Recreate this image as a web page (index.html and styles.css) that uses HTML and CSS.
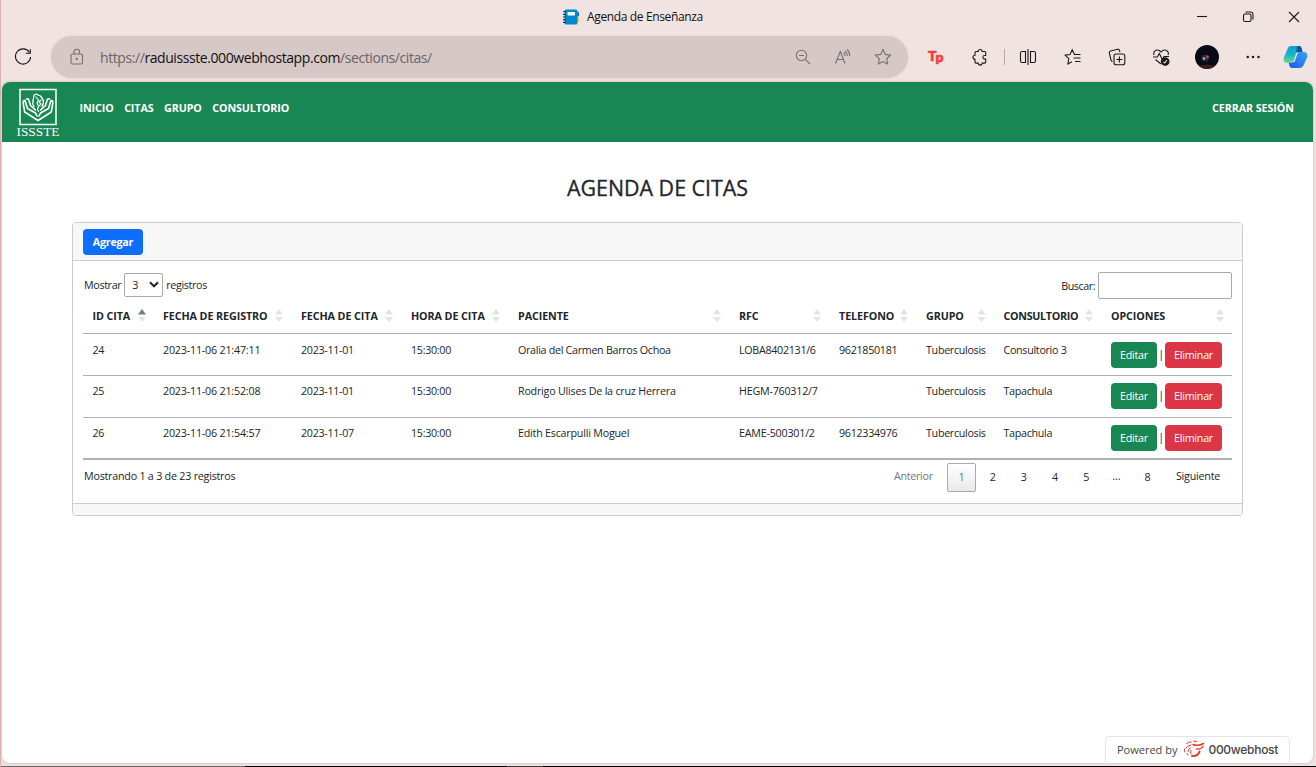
FILE: index.html
```html
<!DOCTYPE html>
<html lang="es">
<head>
<meta charset="utf-8">
<title>Agenda de Enseñanza</title>
<link rel="stylesheet" href="styles.css">
</head>
<body>
<div class="window">
  <header class="titlebar">
    <div class="tab-title">
      <svg width="18" height="16" viewBox="0 0 18 16"><rect x="13" y="3" width="4" height="4.500" rx="1" fill="#1a5fd0"/><rect x="13" y="8.500" width="4" height="4.500" rx="1" fill="#fcc21b"/><rect x="2.500" y=".5" width="13" height="15" rx="1.500" fill="#0288d1"/><rect x="5.500" y="3" width="7.500" height="3.500" rx=".8" fill="#fff"/><path d="M1 2.500h3M1 5.300h3M1 8h3M1 10.700h3M1 13.400h3" stroke="#263845" stroke-width="1.200"/></svg>
      <span>Agenda de Enseñanza</span>
    </div>
    <div class="window-controls">
      <svg width="12" height="12" viewBox="0 0 12 12"><path d="M1 5.500h10"/></svg>
      <svg width="12" height="12" viewBox="0 0 12 12"><rect x="1.500" y="3" width="7.500" height="7.500" rx="1.500"/><path d="M3.500 1h5A2.500 2.500 0 0 1 11 3.500V8.500"/></svg>
      <svg width="12" height="12" viewBox="0 0 12 12"><path d="M1 1l10 10M11 1L1 11"/></svg>
    </div>
  </header>
  <div class="toolbar">
    <svg class="reload" width="20" height="20" viewBox="0 0 20 20"><path d="M16.300 5.200A7.600 7.600 0 1 0 17.600 10M17.300 2.200v4h-4.500"/></svg>
    <div class="address">
      <svg class="muted" width="16" height="18" viewBox="0 0 16 18"><rect x="2" y="6" width="11.500" height="10" rx="1.500"/><path d="M5 6V4a2.700 2.700 0 0 1 5.500 0v2"/><circle cx="7.750" cy="11" r=".6"/></svg>
      <span class="url">https://<b>raduissste.000webhostapp.com</b>/sections/citas/</span>
      <div class="address-icons">
        <svg class="muted" width="18" height="18" viewBox="0 0 18 18"><circle cx="7.500" cy="7.500" r="5.200"/><path d="M11.400 11.400l4.600 4.600M5 7.500h5"/></svg>
        <svg class="muted" width="18" height="18" viewBox="0 0 18 18"><path d="M1.500 15.500L6.300 3.500l4.700 12M3 11.500h6.500M9.500 4.500q1.700 1.300 1.500 3.500M11 3q2.500 2 2.300 5M13 1.500q3 2.500 2.500 6.500"/></svg>
        <svg class="muted" width="18" height="18" viewBox="0 0 18 18"><path d="M9 1.500l2.300 4.900 5.200.7-3.800 3.700.9 5.300L9 13.600l-4.600 2.500.9-5.300L1.500 7.100l5.200-.7z"/></svg>
      </div>
    </div>
    <div class="tools">
      <span class="tp">T<i>p</i></span>
      <svg class="puzzle" width="18" height="18" viewBox="0 0 18 18"><path d="M5 3.500h2.200a2 2 0 0 1 4 0h2.500q1 0 1 1V7.500h-1a1.800 1.800 0 0 0 0 3.600h1v3q0 1-1 1h-2.500a2 2 0 0 1-4 0H5q-1 0-1-1V11.300a2 2 0 0 1 0-4V4.500q0-1 1-1z"/></svg>
      <i class="divider"></i>
      <svg class="split" width="18" height="18" viewBox="0 0 18 18"><path d="M6.500 3.500H3q-1.500 0-1.500 1.500v8q0 1.500 1.500 1.500h3.500zM11.500 14.500V3.500H15q1.500 0 1.500 1.500v8q0 1.500-1.500 1.500zM9 1v16"/></svg>
      <svg class="favs" width="18" height="18" viewBox="0 0 18 18"><path d="M10.500 6.500L8.200 1.700 6 6.500l-4.800.6 3.600 3.500-.9 5.300 4-2.200M10 6.500h6.500M9.500 10h7M11 13.500h5.500"/></svg>
      <svg class="collections" width="18" height="18" viewBox="0 0 18 18"><rect x="6" y="6" width="10.800" height="10.800" rx="2"/><path d="M11.400 8.500v6M8.400 11.500h6M4.500 13.500Q3.500 13.300 3 12L1.300 5Q1 3.500 2.500 3l7-1.800q1.500-.2 2 1.200l.4 1.600"/></svg>
      <svg class="health" width="18" height="18" viewBox="0 0 18 18"><path d="M2 7Q1 3.500 4 2.200 7 1.300 9 4q2-2.700 5-1.800Q17 3.500 16.200 7M1 9h4.300l2-3.500 3 6L12 8.500h5M3.500 11.500L9 16"/><circle cx="13.200" cy="13.500" r="3.800" class="ink"/><path d="M11.500 13.800l1.200 1.200 2.200-3" class="check"/></svg>
      <svg class="avatar" width="24" height="24" viewBox="0 0 24 24"><circle cx="12" cy="12" r="12" fill="#090a16"/><path d="M4 21q8-2.500 16 0-8 5-16 0z" fill="#42181b"/><circle cx="10" cy="13" r="3.600" fill="#25244c"/><circle cx="9" cy="13.500" r="1.300" fill="#d9a3a2"/><circle cx="12.500" cy="12" r="1.400" fill="#b85938"/></svg>
      <svg class="more" width="18" height="18" viewBox="0 0 18 18"><g class="ink"><circle cx="3.700" cy="9" r=".7"/><circle cx="9" cy="9" r=".7"/><circle cx="14.500" cy="9" r=".7"/></g></svg>
      <svg class="copilot" width="25" height="24" viewBox="0 0 25 24"><defs><linearGradient id="ca" x1="0" y1="0" x2="0" y2="1"><stop stop-color="#109ddd"/><stop offset=".5" stop-color="#18b5c4"/><stop offset="1" stop-color="#6ddc89"/></linearGradient><linearGradient id="cb" x1="0" y1="1" x2="1" y2="0"><stop stop-color="#1b58e8"/><stop offset="1" stop-color="#36a9f4"/></linearGradient></defs><path d="M8 1h8q2 0 2.500 2l1 4h-4q-2 0-2.700 2l-2.200 6q-.8 3-3.500 3H4q-4 0-3.300-5L4.500 4Q5.500 1 8 1z" fill="url(#ca)"/><path d="M14 1h2q2 0 2.500 2l1 4h-4q-1.500 0-2.300 1z" fill="#075b91"/><path d="M17 23H9q-2 0-2.500-2l-.8-3H7.500q2.300 0 3-2.500L13 9.500Q13.800 7 16 7h5q4 0 3.300 5l-3.600 8Q19.500 23 17 23z" fill="url(#cb)"/><path d="M13.200 8.500q.5-1.300 2-1.500l-3.700 10H9q1.500-.6 2-2z" fill="#f1e3e1"/></svg>
    </div>
  </div>

  <main class="page">
    <nav class="navbar">
      <svg class="logo" width="44" height="50" viewBox="0 0 44 50">
        <rect x="4" y="2.500" width="36" height="35" fill="none" stroke="#fff" stroke-width="1.500"/>
        <g fill="none" stroke="#fff" stroke-width="1.600" stroke-linecap="round" stroke-linejoin="round"><path d="M9 13.500Q6.500 13 7.500 18l1.200 7L22 33.500 35.300 25l1.200-7q1-5-1.500-4.500M9 13.500l2.500 8 8 4.500 1.500 3M35 13.500l-2.500 8-8 4.500-1.500 3M10.500 12q2-.8 2.500 1.500l1.500 5 5 4.500M33.500 12q-2-.8-2.500 1.500l-1.500 5-5 4.500"/><path d="M18 19.500q-2-2.500-1-5.500l1-6 2.500-1 1.500 1 2.500 1 2.500 3.500q1.300 3.500-1 7" stroke-width="1.300"/><path d="M20 10l2.500 3-1.500 3 1.500 3-1 3.500 1 2M25 13l-2 2 2 2-2 2" stroke-width="1.100"/></g>
        <text x="22" y="48.500" text-anchor="middle" textLength="43" lengthAdjust="spacingAndGlyphs" class="logo-text">ISSSTE</text>
      </svg>
      <a>INICIO</a><a>CITAS</a><a>GRUPO</a><a>CONSULTORIO</a>
      <a class="logout">CERRAR SESIÓN</a>
    </nav>
    <h1>AGENDA DE CITAS</h1>
    <section class="card">
      <div class="card-header"><button class="btn add">Agregar</button></div>
      <div class="card-body">
        <div class="controls">
          <label class="length">Mostrar <span class="select">3<svg width="10" height="7" viewBox="0 0 10 7"><path d="M1 1.300l4 4 4-4"/></svg></span> registros</label>
          <label class="search">Buscar: <input type="text"></label>
        </div>
        <table>
          <colgroup><col class="c1"><col class="c2"><col class="c3"><col class="c4"><col class="c5"><col class="c6"><col class="c7"><col class="c8"><col class="c9"><col class="c10"></colgroup>
          <thead><tr>
            <th class="asc"><div>ID CITA<i></i></div></th><th><div>FECHA DE REGISTRO<i></i></div></th><th><div>FECHA DE CITA<i></i></div></th><th><div>HORA DE CITA<i></i></div></th><th><div>PACIENTE<i></i></div></th><th><div>RFC<i></i></div></th><th><div>TELEFONO<i></i></div></th><th><div>GRUPO<i></i></div></th><th class="tight"><div>CONSULTORIO<i></i></div></th><th><div>OPCIONES<i></i></div></th>
          </tr></thead>
          <tbody>
            <tr><td>24</td><td class="stamp">2023-11-06 21:47:11</td><td>2023-11-01</td><td>15:30:00</td><td>Oralia del Carmen Barros Ochoa</td><td>LOBA8402131/6</td><td>9621850181</td><td>Tuberculosis</td><td>Consultorio 3</td><td><div class="actions"><button class="btn edit">Editar</button><span>|</span><button class="btn delete">Eliminar</button></div></td></tr>
            <tr><td>25</td><td class="stamp">2023-11-06 21:52:08</td><td>2023-11-01</td><td>15:30:00</td><td class="wide">Rodrigo Ulises De la cruz Herrera</td><td class="wide">HEGM-760312/7</td><td></td><td>Tuberculosis</td><td>Tapachula</td><td><div class="actions"><button class="btn edit">Editar</button><span>|</span><button class="btn delete">Eliminar</button></div></td></tr>
            <tr><td>26</td><td class="stamp">2023-11-06 21:54:57</td><td>2023-11-07</td><td>15:30:00</td><td class="wide">Edith Escarpulli Moguel</td><td class="wide">EAME-500301/2</td><td>9612334976</td><td>Tuberculosis</td><td>Tapachula</td><td><div class="actions"><button class="btn edit">Editar</button><span>|</span><button class="btn delete">Eliminar</button></div></td></tr>
          </tbody>
        </table>
        <div class="table-footer">
          <span class="info">Mostrando 1 a 3 de 23 registros</span>
          <div class="pagination"><a class="prev">Anterior</a><a class="num current">1</a><a class="num">2</a><a class="num">3</a><a class="num">4</a><a class="num">5</a><span class="dots">…</span><a class="num">8</a><a class="next">Siguiente</a></div>
        </div>
      </div>
      <div class="card-footer"></div>
    </section>
    <div class="powered">
      <span>Powered by</span>
      <svg width="22" height="18" viewBox="0 0 22 18" fill="none" stroke="#e23b30" stroke-linecap="round"><path d="M10 4.500Q15 6.500 20.500 3.500" stroke-width="1.500"/><path d="M20 6q-1.500 3.500-6.500 3" stroke-width="1.300"/><path d="M16.500 11.500Q15 16.500 9 16" stroke-width="2"/><path d="M8 2Q5 2 3.500 3.500M8 5Q4.500 5.500 3 8M7.500 8Q5 9 5 11.500M8 10.500q-1 1.500 0 3.500M1.500 9q-.3 2 .2 3M4 13.500l1 1.500M10.500 1l3 .5" stroke-width="1"/></svg>
      <b>000webhost</b>
    </div>
  </main>
  <div class="taskbar-edge"><i class="edge-a"></i><i class="edge-b"></i></div>
</div>
</body>
</html>
```

FILE: styles.css
```css
* { box-sizing: border-box; }
body { margin: 0; font-family: "Open Sans", "Noto Sans", sans-serif; font-size: 10.72px; color: #212529; }
.window { width: 1316px; height: 767px; background: #f1e3e1; border-left: 1px solid #dbb0ae; display: flex; flex-direction: column; overflow: hidden; }
.window > * { flex: none; }
svg { display: block; flex: none; }

.titlebar { height: 33px; margin-left: -1px; background: #f1e3e1; display: flex; align-items: center; padding-left: 562px; color: #111; }
.tab-title { display: flex; align-items: center; gap: 7px; font-size: 12px; letter-spacing: -.36px; white-space: nowrap; }
.window-controls { margin-left: auto; display: flex; gap: 34px; padding-right: 16px; }
.window-controls svg, .toolbar svg { fill: none; stroke: #1b1a1a; stroke-width: 1.1; }
.toolbar .ink { fill: #1b1a1a; }
.toolbar .check { stroke: #f1e3e1; }
.toolbar { height: 49px; margin-left: -1px; background: #f1e3e1; padding: 3px 0 4px 13px; display: flex; align-items: center; }
.address { width: 857px; height: 42px; margin-left: 18px; border-radius: 21px; background: #d6c8c7; display: flex; align-items: center; padding: 0 16px 0 18px; box-shadow: 0 0 3px #e2d2d0; }
.toolbar svg.muted { stroke: #767070; }
.url { margin-left: 15px; font-size: 14px; letter-spacing: -.42px; color: #6a6464; white-space: nowrap; }
.url b { color: #111; font-weight: 400; }
.address-icons { margin-left: auto; display: flex; gap: 22px; }
.tools { display: flex; align-items: center; }
.toolbar .avatar, .toolbar .copilot { stroke: none; }
.tp { width: 18px; margin-left: 20px; color: #f64039; font: 900 14px/18px Lato, sans-serif; display: flex; letter-spacing: -1px; -webkit-text-stroke: .7px #f64039; }
.tp i { font-style: normal; line-height: 20px; }
.puzzle { margin-left: 25px; }
.divider { width: 1px; height: 16px; background: #b7abaa; margin-left: 15px; }
.split { margin-left: 14px; }
.favs { margin-left: 27px; }
.collections { margin-left: 26px; }
.health { margin-left: 26px; }
.avatar { margin-left: 25px; }
.more { margin-left: 25px; }
.copilot { margin-left: 21px; }

.page { width: 1311px; height: 681px; margin-left: 1px; background: #fff; border-radius: 8px; overflow: hidden; display: flex; flex-direction: column; box-shadow: 0 0 3px #c9b5b3; }
.navbar { height: 60px; background: #198754; display: flex; align-items: center; color: #fff; font-weight: 700; padding: 0 19px 0 14px; gap: 10.5px; letter-spacing: -.1px; flex: none; }
.navbar a { padding-bottom: 8px; white-space: nowrap; }
.logo { margin-right: 9px; }
.logo-text { font: 12.5px "Liberation Serif", serif; fill: #fff; letter-spacing: 0; }
.navbar .logout { margin-left: auto; letter-spacing: -.06px; }
h1 { margin: 33px 0 0; height: 47px; text-align: center; font-size: 21.4px; line-height: 26px; font-weight: 500; letter-spacing: 0; -webkit-text-stroke: .3px #212529; }
.card { width: 1171px; height: 294px; margin-left: 70px; border: 1px solid #ccc; border-radius: 4px; overflow: hidden; display: flex; flex-direction: column; }
.card-header { height: 38px; padding: 6px 10px; background: #f7f7f7; border-bottom: 1px solid #ccc; }
.btn { border: 0; border-radius: 4px; height: 26px; padding: 0; color: #fff; font: inherit; letter-spacing: -.24px; display: block; }
.add { width: 60px; background: #0d6efd; font-weight: 700; }
.edit { width: 46px; background: #198754; }
.delete { width: 57px; background: #dc3545; }
.card-body { height: 242px; padding: 11px 10px 0; letter-spacing: -.3px; }
.controls { height: 27px; display: flex; justify-content: space-between; }
.length { display: flex; align-items: center; gap: 3px; height: 25px; line-height: 14px; letter-spacing: -.35px; padding: 0 0 0 1px; }
.select { width: 39px; height: 24px; border: 1px solid #aaa; border-radius: 2px; display: flex; align-items: center; justify-content: space-between; padding: 0 3px 0 7px; }
.select svg { fill: none; stroke: #212529; stroke-width: 2; }
.search { display: flex; align-items: center; gap: 3px; letter-spacing: -.45px; }
.search input { width: 134px; height: 27px; border: 1px solid #aaa; border-radius: 2px; background: #fff; }
table { width: 1149px; border-collapse: separate; border-spacing: 0; table-layout: fixed; border-bottom: 2px solid #b0b0b0; }
.c1 { width: 70px; } .c2 { width: 138px; } .c3 { width: 110px; } .c4 { width: 107px; } .c5 { width: 221px; } .c6 { width: 100px; } .c7 { width: 87px; } .c8 { width: 77.5px; } .c9 { width: 107.5px; } .c10 { width: 131px; }
th { height: 35px; padding: 0 8px 1px 10px; text-align: left; font-weight: 700; border-bottom: 1px solid #b0b0b0; white-space: nowrap; letter-spacing: -.08px; }
th:first-child { padding-right: 7px; }
th.tight { letter-spacing: -.3px; }
th div { display: flex; align-items: center; justify-content: space-between; }
th i { width: 8px; height: 13px; background: #e2e3e4; clip-path: polygon(50% 0, 100% 42%, 0 42%, 0 62%, 100% 62%, 50% 100%, 0 62%, 0 42%); }
th.asc i { background: linear-gradient(#777a7d 50%, #e2e3e4 50%); }
td { height: 42px; padding: 8px 0 0 10px; vertical-align: top; white-space: nowrap; line-height: 16px; border-bottom: 1px solid #b0b0b0; }
td:first-child, th:first-child { padding-left: 9.500px; }
td.stamp { letter-spacing: -.2px; }
td.wide { letter-spacing: -.22px; }
tr:nth-child(2) td { padding-top: 7px; }
tbody tr:last-child td { border-bottom: 0; height: 40px; padding-top: 7px; }
.actions { display: flex; justify-content: space-between; align-items: center; width: 111px; height: 26px; }
.actions span { padding-bottom: 2px; }
.table-footer { display: flex; justify-content: space-between; padding-top: 3px; }
.info { padding: 6px 0 0 1px; letter-spacing: -.23px; }
.pagination { display: flex; align-items: center; height: 29px; line-height: 27px; }
.pagination > * { text-align: center; height: 29px; }
.prev { width: 61px; margin-right: 3px; color: #71767a; }
.num { width: 29px; margin-right: 2.2px; border: 1px solid transparent; line-height: 27px; }
.current { border-color: #aaa; border-radius: 2px; background: linear-gradient(#fff, #e9e9e9); color: #4c79a8; }
.dots { width: 27px; margin-right: 3px; }
.next { width: 68px; letter-spacing: -.22px; }
.card-footer { height: 12px; background: #f7f7f7; border-top: 1px solid #ccc; }
.powered { margin: auto 23px 0 auto; width: 185px; height: 27px; border: 1px solid #e4e4e4; border-bottom: 0; border-radius: 5px 5px 0 0; display: flex; align-items: center; padding: 0 0 2px 11px; color: #444; font-size: 11px; white-space: nowrap; }
.powered svg { margin: 0 3px 0 6px; }
.powered b { font: 500 12px Inter, sans-serif; letter-spacing: -.28px; }
.taskbar-edge { height: 1px; margin: 3px 0 0 -1px; background: #000; display: flex; }
.edge-a { width: 245px; background: #686262; }
.edge-b { width: 36px; margin-left: 262px; background: #3c3838; }
```
